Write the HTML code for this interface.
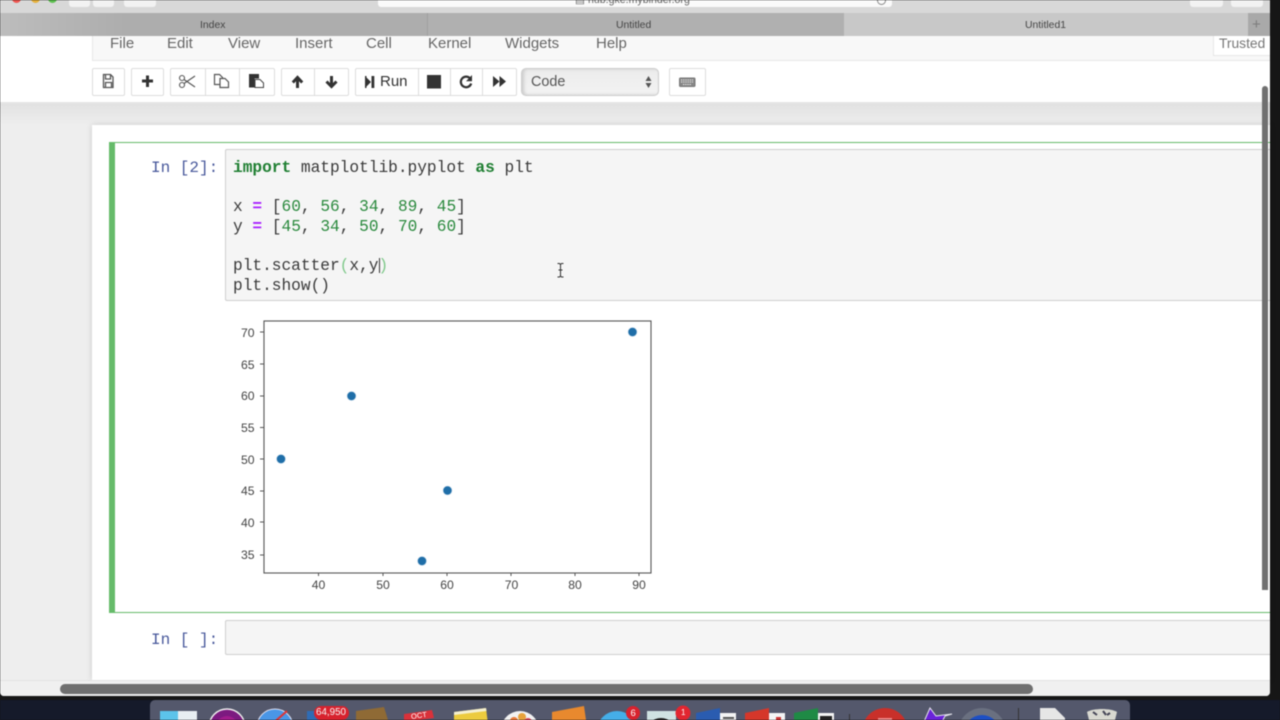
<!DOCTYPE html>
<html><head><meta charset="utf-8"><style>
html,body{margin:0;padding:0;width:1280px;height:720px;overflow:hidden;background:#161616}
#r{position:absolute;left:0;top:0;width:1280px;height:720px;overflow:hidden;filter:blur(.45px);font-family:"Liberation Sans",sans-serif}
.a{position:absolute}
.t{position:absolute;white-space:pre}
.m{font-family:"Liberation Mono",monospace;font-size:16.17px;line-height:20px;color:#3a3a3a}
.k{color:#1f7f32;font-weight:bold}.o{color:#a2f;font-weight:bold}.n{color:#2b8a3e}.g{color:#4a5a9c}
.b{position:absolute;top:68px;height:28px;box-sizing:border-box;border:1px solid #ddd;background:#fff;border-radius:2px}
.d{position:absolute;top:69px;width:1px;height:26px;background:#ddd}
.menu{top:35px;font-size:15px;line-height:18px;color:#666}
.tab{font-size:10.4px;line-height:15px;color:#444;top:18px}
</style></head><body><div id="r">
<div class="a" style="left:0;top:700px;width:1280px;height:20px;background:#151a2a"></div>
<div class="a" style="left:0;top:0;width:1270px;height:696px;background:#eee;border-radius:0 0 4px 4px"></div>
<!-- browser chrome -->
<div class="a" style="left:0;top:0;width:1270px;height:13px;background:#d8d8d8"></div>
<div class="a" style="left:11.500px;top:-6px;width:9px;height:9px;border-radius:50%;background:#ee5550"></div>
<div class="a" style="left:30.500px;top:-6px;width:9px;height:9px;border-radius:50%;background:#e5b03a"></div>
<div class="a" style="left:48px;top:-6px;width:9px;height:9px;border-radius:50%;background:#5cc04e"></div>
<div class="a" style="left:69px;top:-5px;width:21px;height:12px;background:#f2f2f2;border-radius:3px"></div>
<div class="a" style="left:93px;top:-5px;width:21px;height:12px;background:#f2f2f2;border-radius:3px"></div>
<div class="a" style="left:124px;top:-5px;width:32px;height:12px;background:#f2f2f2;border-radius:3px"></div>
<div class="a" style="left:378px;top:-5px;width:514px;height:12px;background:#fafafa;border-radius:3px"></div>
<div class="t" style="left:575px;top:-6px;font-size:10.600px;line-height:12px;color:#666">▤ hub.gke.mybinder.org</div>
<div class="a" style="left:877px;top:-4px;width:7px;height:7px;border:1px solid #888;border-radius:50%"></div>
<div class="a" style="left:1190px;top:-5px;width:33px;height:12px;background:#f2f2f2;border-radius:3px"></div>
<div class="a" style="left:1231px;top:-5px;width:32px;height:12px;background:#f2f2f2;border-radius:3px"></div>
<!-- tabs -->
<div class="a" style="left:0;top:13px;width:427px;height:23px;background:linear-gradient(90deg,#bdbdbd,#adadad 30%,#adadad);border-right:1px solid #a0a0a0"></div>
<div class="a" style="left:428px;top:13px;width:416px;height:23px;background:#b0b0b0"></div>
<div class="a" style="left:844px;top:13px;width:404px;height:23px;background:#c8c8c8"></div>
<div class="a" style="left:1248px;top:13px;width:22px;height:23px;background:#a9a9a9"></div>
<div class="t tab" style="left:200px">Index</div>
<div class="t tab" style="left:616px">Untitled</div>
<div class="t tab" style="left:1025px">Untitled1</div>
<div class="t" style="left:1252px;top:15px;font-size:15px;line-height:20px;color:#7c7c7c">+</div>
<!-- header / toolbar -->
<div class="a" style="left:0;top:36px;width:1270px;height:66px;background:#fff"></div>
<div class="a" style="left:92px;top:36px;width:1178px;height:25px;box-sizing:border-box;background:#f8f8f8;border-bottom:1px solid #e7e7e7;border-left:1px solid #e7e7e7"></div>
<div class="t menu" style="left:110px">File</div>
<div class="t menu" style="left:167px">Edit</div>
<div class="t menu" style="left:228px">View</div>
<div class="t menu" style="left:295px">Insert</div>
<div class="t menu" style="left:366px">Cell</div>
<div class="t menu" style="left:428px">Kernel</div>
<div class="t menu" style="left:505px">Widgets</div>
<div class="t menu" style="left:596px">Help</div>
<div class="a" style="left:1213px;top:36px;width:57px;height:20px;box-sizing:border-box;background:#fff;border-left:1px solid #e7e7e7;border-bottom:1px solid #e7e7e7"></div>
<div class="t" style="left:1219px;top:35px;font-size:13.800px;line-height:18px;color:#777">Trusted</div>
<div class="a" style="left:0;top:102px;width:1270px;height:2px;background:#e4e4e4"></div>
<div class="b" style="left:92px;width:33px"></div>
<div class="b" style="left:131px;width:33px"></div>
<div class="b" style="left:170px;width:105px"></div>
<div class="d" style="left:205px"></div>
<div class="d" style="left:239px"></div>
<div class="b" style="left:281px;width:68px"></div>
<div class="d" style="left:314px"></div>
<div class="b" style="left:355px;width:162px"></div>
<div class="d" style="left:418px"></div>
<div class="d" style="left:450px"></div>
<div class="d" style="left:482px"></div>
<div class="a" style="left:521px;top:68px;width:138px;height:28px;box-sizing:border-box;border:1px solid #ccc;border-radius:5px;background:linear-gradient(#ececec,#f3f3f3);box-shadow:inset 2px 0 3px #ccc"></div>
<div class="t" style="left:531px;top:73px;font-size:14.400px;line-height:18px;color:#555">Code</div>
<div class="b" style="left:669px;width:37px"></div>
<svg class="a" style="left:0;top:60px" width="720" height="44" viewBox="0 60 720 44">
<!-- save -->
<path d="M103.500 74.500h7l2.500 2.500v10.500h-9.500z M105.500 74.500v4.500h5v-4.500 M105.500 87.500v-5h6v5" fill="none" stroke="#555" stroke-width="1.300"/>
<!-- plus -->
<path d="M147.500 75.500v11.500M142 81h11" stroke="#333" stroke-width="3" fill="none"/>
<!-- scissors -->
<g fill="none" stroke="#555" stroke-width="1.100"><circle cx="182" cy="78" r="2.500"/><circle cx="182" cy="85" r="2.500"/><path d="M184 79.500L195 87M184 83.500L195 76"/></g>
<!-- copy -->
<g fill="#fff" stroke="#555" stroke-width="1.200"><path d="M214.500 74.500h5l3 3v7h-8z" /><path d="M220 78.500h5l3.500 3.500v5.500h-8.500z"/></g>
<!-- paste -->
<path d="M249 74h10v4.500h-4.500v9H249z" fill="#333"/><path d="M255 79.500h5l3.500 3.500v4.500H255z" fill="#fff" stroke="#444"/>
<!-- up/down -->
<path d="M297.500 88v-10M292.800 82.500l4.700-5 4.700 5" fill="none" stroke="#333" stroke-width="3"/>
<path d="M331.500 76v10M326.500 81.500l5 5 5-5" fill="none" stroke="#333" stroke-width="3"/>
<!-- run -->
<path d="M365 76v12l6-6z" fill="#333"/><rect x="371.500" y="76" width="2.800" height="12" fill="#333"/><rect x="365" y="76" width="1.500" height="12" fill="#333"/>
<!-- stop -->
<rect x="427" y="75" width="14" height="13.500" fill="#333"/>
<!-- restart -->
<path d="M470 78.300a5.300 5.300 0 1 0 1.200 5.200" fill="none" stroke="#333" stroke-width="2.200"/><path d="M472 75v6.300h-6z" fill="#333"/>
<!-- ffwd -->
<path d="M493 76v11l6.500-5.500zM499.500 76v11l6.500-5.500z" fill="#333"/>
<!-- select arrows -->
<path d="M645.500 81l3-5 3 5zM645.500 83l3 5 3-5z" fill="#555"/>
<!-- keyboard -->
<rect x="679.500" y="78" width="15.500" height="8.500" rx="1" fill="#888" stroke="#777"/>
<path d="M681 80h12M681 82h12M683 84.500h8" stroke="#f4f4f4" stroke-width="1.100" stroke-dasharray="1.200 1"/>
</svg>
<div class="t" style="left:380px;top:73px;font-size:15px;line-height:18px;color:#333">Run</div>
<!-- page area -->
<div class="a" style="left:0;top:104px;width:1270px;height:21px;background:linear-gradient(#e2e2e2,#eee)"></div>
<div class="a" style="left:92px;top:125px;width:1178px;height:555px;background:#fff;box-shadow:0 0 6px rgba(0,0,0,.15)"></div>
<!-- selected cell -->
<div class="a" style="left:109px;top:142px;width:1161px;height:471px;box-sizing:border-box;border:1px solid #66bb6a;border-right:0;border-left:6px solid #66bb6a"></div>
<div class="a" style="left:225px;top:149px;width:1045px;height:152px;box-sizing:border-box;background:#f5f5f5;border:1px solid #cfcfcf;border-right:0;border-radius:2px 0 0 2px"></div>
<div class="t m g" style="left:151px;top:158px;font-size:16px">In [2]:</div>
<div class="t m" style="left:233px;top:158px"><span class="k">import</span> matplotlib.pyplot <span class="k">as</span> plt</div>
<div class="t m" style="left:233px;top:197px">x <span class="o">=</span> [<span class="n">60</span>, <span class="n">56</span>, <span class="n">34</span>, <span class="n">89</span>, <span class="n">45</span>]</div>
<div class="t m" style="left:233px;top:217px">y <span class="o">=</span> [<span class="n">45</span>, <span class="n">34</span>, <span class="n">50</span>, <span class="n">70</span>, <span class="n">60</span>]</div>
<div class="t m" style="left:233px;top:256px">plt.scatter<span style="color:#7fc98a">(</span>x,y<span style="color:#7fc98a">)</span></div>
<div class="a" style="left:379px;top:258px;width:1px;height:15px;background:#333"></div>
<div class="t m" style="left:233px;top:276px">plt.show()</div>
<svg class="a" style="left:554px;top:262px" width="13" height="18"><path d="M3.500 1.500h2l1 1 1-1h2M6.500 2.500v11.500M3.500 15h2l1-1 1 1h2M4.500 8h4" fill="none" stroke="#333" stroke-width="1"/></svg>
<!-- plot -->
<svg class="a" style="left:225px;top:310px" width="440" height="290" viewBox="225 310 440 290">
<rect x="264" y="321" width="387" height="252" fill="#fff" stroke="#555" stroke-width="1.100"/>
<g stroke="#555" stroke-width="1">
<path d="M260 332h4M260 364h4M260 396h4M260 459h4M260 491h4M260 522h4M260 555h4M260 427.500h4"/>
<path d="M318.500 573v3M383 573v3M447 573v3M511 573v3M575 573v3M639 573v3"/>
</g>
<g fill="#1f6ea8" stroke="#cfe0ee" stroke-width=".6"><circle cx="632.500" cy="332" r="4.500"/><circle cx="351.500" cy="396" r="4.500"/><circle cx="281" cy="459" r="4.500"/><circle cx="447.500" cy="490.500" r="4.500"/><circle cx="422" cy="561" r="4.500"/></g>
<g font-family="Liberation Sans" font-size="12.200" fill="#444" text-anchor="end">
<text x="254.500" y="337">70</text><text x="254.500" y="369">65</text><text x="254.500" y="400">60</text><text x="254.500" y="432">55</text><text x="254.500" y="464">50</text><text x="254.500" y="495">45</text><text x="254.500" y="527">40</text><text x="254.500" y="559">35</text>
</g>
<g font-family="Liberation Sans" font-size="12.200" fill="#444" text-anchor="middle">
<text x="318.500" y="589">40</text><text x="383" y="589">50</text><text x="447" y="589">60</text><text x="511.500" y="589">70</text><text x="575" y="589">80</text><text x="639" y="589">90</text>
</g>
</svg>
<!-- empty cell -->
<div class="t m g" style="left:151px;top:630px;font-size:16px">In [ ]:</div>
<div class="a" style="left:225px;top:620px;width:1045px;height:35px;box-sizing:border-box;background:#f5f5f5;border:1px solid #cfcfcf;border-right:0;border-radius:2px 0 0 2px"></div>
<!-- scrollbars -->
<div class="a" style="left:0;top:680px;width:1270px;height:16px;background:#f0f0f0;border-radius:0 0 4px 4px;border-top:1px solid #e2e2e2;box-sizing:border-box"></div>
<div class="a" style="left:60px;top:684px;width:973px;height:10px;background:#6f6f6f;border-radius:5px"></div>
<div class="a" style="left:1262px;top:86px;width:6px;height:504px;background:#707070;border-radius:3px 3px 0 0"></div>
<!-- dock -->
<div class="a" style="left:150px;top:700px;width:980px;height:24px;background:#54586c;border-radius:5px 5px 0 0"></div>
<svg class="a" style="left:150px;top:700px" width="980" height="20" viewBox="150 700 980 20">
<rect x="160" y="711" width="37" height="12" fill="#5cc3ea"/><rect x="178" y="711" width="19" height="12" fill="#e8eef2"/>
<circle cx="227" cy="727" r="18" fill="#7c1a80" stroke="#eee" stroke-width="1.500"/><circle cx="227" cy="727" r="11" fill="#a01c8c"/>
<circle cx="275" cy="727" r="18" fill="#4a96e6" stroke="#dde" stroke-width="1"/><path d="M287 711l-16 14" stroke="#d33" stroke-width="2"/>
<rect x="307" y="711" width="12" height="12" fill="#2f6cb5"/><rect x="314" y="706" width="35" height="14" rx="7" fill="#d8222e"/>
<path d="M356 711l28-4 4 13h-32z" fill="#8f6a35"/>
<path d="M404 714l28-4 2 8-30 4z" fill="#d9313a"/><rect x="405" y="720" width="30" height="4" fill="#eee"/>
<path d="M454 712l32-4 2 16h-34z" fill="#eccb3e"/><path d="M454 712l32-4 .500 3-32.500 4z" fill="#f5f0d0"/>
<circle cx="520" cy="730" r="19" fill="#f2f2f2"/><circle cx="514" cy="721" r="4" fill="#e87a3a"/><circle cx="522" cy="717" r="4" fill="#e8a23a"/><circle cx="528" cy="722" r="4" fill="#d9485a"/>
<path d="M552 712l32-6 2 14-34 4z" fill="#e8892e"/><rect x="556" y="720" width="26" height="4" fill="#eef"/>
<circle cx="617" cy="731" r="20" fill="#45aee8"/><circle cx="633" cy="713" r="7" fill="#d8222e"/>
<rect x="647" y="711" width="29" height="13" fill="#cfe2e2"/><circle cx="661" cy="733" r="15" fill="#222"/><circle cx="683" cy="713" r="7.500" fill="#e22630"/>
<path d="M696 713l24-5v16h-24z" fill="#2a5cb0"/><rect x="720" y="713" width="16" height="11" fill="#f4f4f4"/><rect x="723" y="717" width="11" height="2" fill="#555"/>
<path d="M745 713l24-5v16h-24z" fill="#d5372a"/><rect x="769" y="713" width="16" height="11" fill="#f4f4f4"/><rect x="776" y="717" width="5" height="4" fill="#c33"/>
<path d="M794 713l24-5v16h-24z" fill="#1f8a45"/><rect x="818" y="713" width="16" height="11" fill="#f4f4f4"/><rect x="820" y="716" width="12" height="5" fill="#222"/>
<rect x="849" y="714" width="1" height="8" fill="#333"/>
<circle cx="885" cy="731" r="23" fill="#c9302a"/><rect x="878" y="718" width="14" height="4" fill="#e88"/>
<path d="M930 708l-7 16h18l4-8 7-2-16 2z" fill="#6a22d8" stroke="#e8e8f0" stroke-width="1"/>
<circle cx="982" cy="732" r="24" fill="#6a7080"/><circle cx="982" cy="733" r="18" fill="#1d4fc4"/>
<rect x="1018" y="708" width="1" height="14" fill="#333"/>
<path d="M1040 708h15l10 10v6h-25z" fill="#e6e6e6"/>
<path d="M1087 712c6-4 24-4 30 0l-3 12h-24z" fill="#d8d8d0"/><path d="M1093 712l4 3M1103 711l3 4M1110 713l-3 2" stroke="#445" stroke-width="2"/>
</svg>
<div class="t" style="left:316px;top:707px;font-size:9.800px;line-height:12px;color:#f6f6f6">64,950</div>
<div class="t" style="left:411px;top:711px;font-size:7.500px;line-height:9px;color:#fff;transform:rotate(-8deg)">OCT</div>
<div class="t" style="left:630.500px;top:708px;font-size:9.500px;line-height:11px;color:#fff">6</div>
<div class="t" style="left:681px;top:708px;font-size:8px;line-height:10px;color:#fff">1</div>
</div></body></html>
